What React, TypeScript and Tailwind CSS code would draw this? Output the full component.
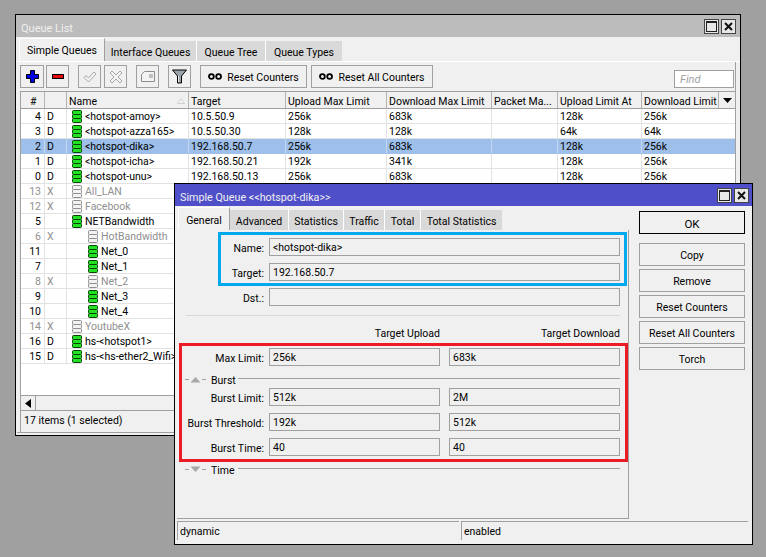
import React from 'react';

const queues = [
  { id: '4', flag: 'D', name: '<hotspot-amoy>', target: '10.5.50.9', up: '256k', down: '683k', upAt: '128k', downAt: '256k' },
  { id: '3', flag: 'D', name: '<hotspot-azza165>', target: '10.5.50.30', up: '128k', down: '128k', upAt: '64k', downAt: '64k' },
  { id: '2', flag: 'D', name: '<hotspot-dika>', target: '192.168.50.7', up: '256k', down: '683k', upAt: '128k', downAt: '256k', selected: true },
  { id: '1', flag: 'D', name: '<hotspot-icha>', target: '192.168.50.21', up: '192k', down: '341k', upAt: '128k', downAt: '256k' },
  { id: '0', flag: 'D', name: '<hotspot-unu>', target: '192.168.50.13', up: '256k', down: '683k', upAt: '128k', downAt: '256k' },
  { id: '13', flag: 'X', name: 'All_LAN' },
  { id: '12', flag: 'X', name: 'Facebook' },
  { id: '5', flag: '', name: 'NETBandwidth' },
  { id: '6', flag: 'X', name: 'HotBandwidth', child: true },
  { id: '11', flag: '', name: 'Net_0', child: true },
  { id: '7', flag: '', name: 'Net_1', child: true },
  { id: '8', flag: 'X', name: 'Net_2', child: true },
  { id: '9', flag: '', name: 'Net_3', child: true },
  { id: '10', flag: '', name: 'Net_4', child: true },
  { id: '14', flag: 'X', name: 'YoutubeX' },
  { id: '16', flag: 'D', name: 'hs-<hotspot1>' },
  { id: '15', flag: 'D', name: 'hs-<hs-ether2_Wifi>' },
];

const QueueIcon = ({ off }: { off: boolean }) => {
  const fill = off ? '#f2f2f2' : '#22e022';
  const line = off ? '#8e8e8e' : '#064006';
  return (
    <svg width="12" height="13" viewBox="0 0 12 13" className="shrink-0">
      {[0.5, 4.5, 8.5].map((y) => (
        <rect key={y} x="1.5" y={y} width="9" height="4" rx="1" fill={fill} stroke={line} />
      ))}
    </svg>
  );
};

const WinButtons = () => (
  <div className="flex gap-[2px]">
    <div className="w-[15px] h-[15px] border border-[#444] bg-[#e8e8e8] flex items-center justify-center">
      <div className="w-[11px] h-[11px] border border-[#222] border-t-2" />
    </div>
    <div className="w-[15px] h-[15px] border border-[#444] bg-[#e8e8e8] flex items-center justify-center">
      <svg width="9" height="9" viewBox="0 0 9 9">
        <path d="M1 1l7 7M8 1l-7 7" stroke="#111" strokeWidth="2" />
      </svg>
    </div>
  </div>
);

const ToolButton = ({ children, w = 'w-[23px]' }: { children: React.ReactNode; w?: string }) => (
  <div className={`${w} h-[23px] border border-[#a0a0a0] flex items-center justify-center shrink-0`}>{children}</div>
);

const Zeros = () => (
  <svg width="14" height="7" viewBox="0 0 14 7" className="shrink-0">
    <ellipse cx="3.400" cy="3.500" rx="2.400" ry="2.400" fill="none" stroke="#000" strokeWidth="1.800" />
    <ellipse cx="10.600" cy="3.500" rx="2.400" ry="2.400" fill="none" stroke="#000" strokeWidth="1.800" />
  </svg>
);

const Field = ({ value, w = 'w-[171px]' }: { value?: string; w?: string }) => (
  <div className={`${w} h-[18px] border border-[#a0a0a0] pl-[3px] leading-[18px] shrink-0`}>{value}</div>
);

const FormRow = ({ label, labelW, children }: { label: string; labelW: string; children: React.ReactNode }) => (
  <div className="flex items-start">
    <div className={`${labelW} h-[18px] pt-[4px] text-right mr-[5px] shrink-0`}>{label}</div>
    {children}
  </div>
);

const GroupHeader = ({ label, open }: { label: string; open: boolean }) => (
  <div className="flex items-center h-[16px]">
    <svg width="21" height="7" viewBox="0 0 21 7" className="shrink-0 ml-[3px] mb-[2px]">
      <path d="M0 3.500h4M17 3.500h4" stroke="#a0a0a0" />
      <path d={open ? 'M5.500 6.500L10.500 1l5 5.500z' : 'M5.500 .5L10.500 6l5-5.500z'} fill="#a8a8a8" />
    </svg>
    <div className="ml-[5px] w-[27px] pt-[2px] shrink-0">{label}</div>
    <div className="h-[2px] mb-[3px] w-[382px] border-t border-[#a0a0a0]" />
  </div>
);

export default function App() {
  return (
    <div
      className="relative w-[766px] h-[557px] bg-[#a0a0a0] overflow-hidden text-[10.5px] leading-[14px] text-black"
      style={{ fontFamily: 'Roboto, "Liberation Sans", sans-serif' }}
    >
      {/* Queue List window */}
      <div className="absolute left-[15px] top-[14px] w-[726px] h-[422px] border border-black bg-[#f0f0f0] flex flex-col">
        <div className="h-[22px] bg-[#bcbcbc] flex items-center justify-between pl-[5px] pr-[4px] shrink-0">
          <span className="text-[#f0f0f0] text-[11px] pt-[6px]">Queue List</span>
          <WinButtons />
        </div>

        {/* tabs */}
        <div className="h-[25px] flex pl-[3px] items-end shrink-0 border-b border-white">
          <div className="w-[86px] h-[23px] bg-[#f0f0f0] border-t border-l border-r border-t-white border-l-white border-r-[#a0a0a0] flex items-center justify-center pt-[2px]">Simple Queues</div>
          <div className="w-[92px] h-[20px] bg-[#d9d9d9] border-r border-white flex items-center justify-center pt-[4px]">Interface Queues</div>
          <div className="w-[69px] h-[20px] bg-[#d9d9d9] border-r border-white flex items-center justify-center pt-[4px]">Queue Tree</div>
          <div className="w-[76px] h-[20px] bg-[#d9d9d9] flex items-center justify-center pt-[4px]">Queue Types</div>
        </div>

        <div className="flex-1 mr-[4px] ml-[1px] mb-[2px] border-r border-b border-[#a0a0a0] flex flex-col min-h-0">
          {/* toolbar */}
          <div className="h-[29px] flex items-start pt-[3px] pl-[3px] relative shrink-0">
            <ToolButton w="w-[24px]">
              <svg width="13" height="13" viewBox="0 0 13 13">
                <path d="M4.500.5h4v4h4v4h-4v4h-4v-4h-4v-4h4z" fill="#0000e0" stroke="#000" />
              </svg>
            </ToolButton>
            <div className="ml-[2px]">
              <ToolButton w="w-[23px]">
                <svg width="12" height="5" viewBox="0 0 12 5">
                  <rect x=".5" y=".5" width="11" height="4" fill="#e01010" stroke="#000" />
                </svg>
              </ToolButton>
            </div>
            <div className="ml-[9px]">
              <ToolButton>
                <svg width="14" height="12" viewBox="0 0 14 12">
                  <path d="M1 6.500l2-2 2.500 2.500L11 1l2 2-7.500 8z" fill="#f4f4f4" stroke="#a6a6a6" />
                </svg>
              </ToolButton>
            </div>
            <div className="ml-[3px]">
              <ToolButton>
                <svg width="14" height="14" viewBox="0 0 14 14">
                  <path d="M1 3l2-2 4 4 4-4 2 2-4 4 4 4-2 2-4-4-4 4-2-2 4-4z" fill="#f4f4f4" stroke="#a6a6a6" />
                </svg>
              </ToolButton>
            </div>
            <div className="ml-[9px]">
              <ToolButton>
                <svg width="14" height="11" viewBox="0 0 14 11">
                  <path d="M.5 10.500V3.500l3-3h10v10zM8 4h4M8 6h4" fill="#f4f4f4" stroke="#8c8c8c" />
                </svg>
              </ToolButton>
            </div>
            <div className="ml-[9px]">
              <ToolButton>
                <svg width="15" height="15" viewBox="0 0 15 15">
                  <path d="M.5 1h14L9.500 7v7h-4V7z" fill="#9aa4ad" stroke="#000" />
                  <path d="M6.500 7v6" stroke="#e8e8e8" />
                </svg>
              </ToolButton>
            </div>
            <div className="ml-[9px]">
              <ToolButton w="w-[107px]">
                <Zeros />
                <span className="ml-[5px] pt-[3px]">Reset Counters</span>
              </ToolButton>
            </div>
            <div className="ml-[4px]">
              <ToolButton w="w-[122px]">
                <Zeros />
                <span className="ml-[5px] pt-[3px]">Reset All Counters</span>
              </ToolButton>
            </div>
            <div className="absolute right-[1px] top-[8px] w-[60px] h-[18px] border border-[#a0a0a0] bg-white pl-[5px] leading-[18px] italic text-[11px] text-[#a0a0a0]">Find</div>
          </div>

          {/* table */}
          <div className="flex-1 ml-[3px] border-l border-[#a0a0a0] flex flex-col min-h-0">
            <div className="flex h-[18px] border-y border-[#a0a0a0] shrink-0">
              <div className="w-[24px] border-r border-[#b4b4b4] pl-[9px] pt-[3px]">#</div>
              <div className="w-[22px] border-r border-[#b4b4b4]" />
              <div className="w-[122px] border-r border-[#b4b4b4] pl-[2px] pt-[3px] flex justify-between pr-[3px]">
                Name
                <svg width="8" height="6" viewBox="0 0 8 6" className="mt-[3px]">
                  <path d="M.5 5.500L4 .5l3.500 5z" fill="#f4f4f4" stroke="#d0d0d0" />
                </svg>
              </div>
              <div className="w-[97px] border-r border-[#b4b4b4] pl-[2px] pt-[3px]">Target</div>
              <div className="w-[101px] border-r border-[#b4b4b4] pl-[2px] pt-[3px]">Upload Max Limit</div>
              <div className="w-[105px] border-r border-[#b4b4b4] pl-[2px] pt-[3px]">Download Max Limit</div>
              <div className="w-[66px] border-r border-[#b4b4b4] pl-[2px] pt-[3px]">Packet Ma...</div>
              <div className="w-[84px] border-r border-[#b4b4b4] pl-[2px] pt-[3px]">Upload Limit At</div>
              <div className="w-[77px] border-r border-[#b4b4b4] pl-[2px] pt-[3px]">Download Limit</div>
              <div className="w-[16px] flex items-center justify-center">
                <svg width="9" height="5" viewBox="0 0 9 5">
                  <path d="M0 0h9L4.500 5z" fill="#000" />
                </svg>
              </div>
            </div>

            <div className="flex-1 bg-white min-h-0">
              {queues.map((q) => {
                const off = q.flag === 'X';
                const sep = q.selected ? 'border-[#c4d8f1]' : 'border-[#e2e2e2]';
                return (
                  <div
                    key={q.id}
                    className={`flex h-[15px] border-b leading-[14px] ${q.selected ? 'bg-[#9dbfe9] border-b-[#9dbfe9]' : 'border-b-[#e2e2e2]'} ${off ? 'text-[#909090]' : ''}`}
                  >
                    <div className={`w-[24px] border-r pr-[3px] pt-[1px] text-right ${sep}`}>{q.id}</div>
                    <div className={`w-[22px] border-r pl-[2px] pt-[1px] ${sep}`}>{q.flag}</div>
                    <div className={`w-[122px] border-r flex items-center gap-[2px] overflow-hidden whitespace-nowrap ${q.child ? 'pl-[20px]' : 'pl-[4px]'} ${sep}`}>
                      <QueueIcon off={off} />
                      <span className="pt-[2px]">{q.name}</span>
                    </div>
                    <div className={`w-[97px] border-r pl-[2px] pt-[1px] ${sep}`}>{q.target}</div>
                    <div className={`w-[101px] border-r pl-[2px] pt-[1px] ${sep}`}>{q.up}</div>
                    <div className={`w-[105px] border-r pl-[2px] pt-[1px] ${sep}`}>{q.down}</div>
                    <div className={`w-[66px] border-r ${sep}`} />
                    <div className={`w-[84px] border-r pl-[2px] pt-[1px] ${sep}`}>{q.upAt}</div>
                    <div className="w-[77px] pl-[2px] pt-[1px]">{q.downAt}</div>
                  </div>
                );
              })}
            </div>

            {/* scrollbar */}
            <div className="h-[16px] flex border-y border-[#a0a0a0] bg-[#f0f0f0] shrink-0">
              <div className="w-[15px] border-r border-[#a0a0a0] flex items-center justify-center">
                <svg width="6" height="9" viewBox="0 0 6 9">
                  <path d="M6 0v9L0 4.500z" fill="#000" />
                </svg>
              </div>
            </div>
            <div className="h-[21px] pl-[3px] pt-[3px] shrink-0">17 items (1 selected)</div>
          </div>
        </div>
      </div>

      {/* Simple Queue dialog */}
      <div className="absolute left-[174px] top-[183px] w-[579px] h-[362px] border border-black bg-[#f0f0f0] flex flex-col">
        <div className="h-[22px] bg-[#4f50c9] flex items-center justify-between pl-[5px] pr-[3px] shrink-0">
          <span className="text-[#f0f0f0] text-[10.75px] pt-[6px]">{'Simple Queue <<hotspot-dika>>'}</span>
          <WinButtons />
        </div>

        <div className="flex h-[313px] shrink-0">
          <div className="w-[454px] shrink-0">
            <div className="h-[24px] flex items-end pl-[3px]">
              <div className="w-[52px] h-[23px] bg-[#f0f0f0] border-t border-l border-r border-t-white border-l-white border-r-[#a0a0a0] flex items-center justify-center pt-[3px]">General</div>
              <div className="w-[59px] h-[20px] bg-[#d9d9d9] border-r border-white flex items-center justify-center pt-[3px]">Advanced</div>
              <div className="w-[55px] h-[20px] bg-[#d9d9d9] border-r border-white flex items-center justify-center pt-[3px]">Statistics</div>
              <div className="w-[41px] h-[20px] bg-[#d9d9d9] border-r border-white flex items-center justify-center pt-[3px]">Traffic</div>
              <div className="w-[36px] h-[20px] bg-[#d9d9d9] border-r border-white flex items-center justify-center pt-[3px]">Total</div>
              <div className="w-[81px] h-[20px] bg-[#d9d9d9] flex items-center justify-center pt-[3px]">Total Statistics</div>
            </div>

            <div className="h-[289px] ml-[2px] border-r border-b border-[#a0a0a0] pt-[2px]">
              <div className="ml-[41px] w-[409px] h-[54px] border-[3px] border-[#00a8ec] pt-[3px] flex flex-col gap-[7px]">
                <FormRow label="Name:" labelW="w-[43px]">
                  <Field value="<hotspot-dika>" w="w-[351px]" />
                </FormRow>
                <FormRow label="Target:" labelW="w-[43px]">
                  <Field value="192.168.50.7" w="w-[351px]" />
                </FormRow>
              </div>
              <div className="mt-[2px]">
                <FormRow label="Dst.:" labelW="w-[87px]">
                  <Field w="w-[351px]" />
                </FormRow>
              </div>
              <div className="ml-[9px] mt-[9px] w-[434px] h-[2px] border-t border-[#d8d8d8]" />
              <div className="flex ml-[92px] gap-[9px] pt-[10px] h-[26px]">
                <div className="w-[171px] text-right">Target Upload</div>
                <div className="w-[171px] text-right">Target Download</div>
              </div>
              <div className="ml-[2px] w-[449px] h-[119px] border-[3px] border-[#ed1c24] pt-[2px]">
                <FormRow label="Max Limit:" labelW="w-[82px]">
                  <div className="flex gap-[9px]">
                    <Field value="256k" />
                    <Field value="683k" />
                  </div>
                </FormRow>
                <div className="mt-[6px]">
                  <GroupHeader label="Burst" open />
                </div>
                <div className="flex flex-col gap-[7px]">
                  <FormRow label="Burst Limit:" labelW="w-[82px]">
                    <div className="flex gap-[9px]">
                      <Field value="512k" />
                      <Field value="2M" />
                    </div>
                  </FormRow>
                  <FormRow label="Burst Threshold:" labelW="w-[82px]">
                    <div className="flex gap-[9px]">
                      <Field value="192k" />
                      <Field value="512k" />
                    </div>
                  </FormRow>
                  <FormRow label="Burst Time:" labelW="w-[82px]">
                    <div className="flex gap-[9px]">
                      <Field value="40" />
                      <Field value="40" />
                    </div>
                  </FormRow>
                </div>
              </div>
              <div className="ml-[5px]">
                <GroupHeader label="Time" open={false} />
              </div>
            </div>
          </div>

          <div className="ml-[10px] pt-[5px] flex flex-col w-[106px] shrink-0">
            <div className="h-[23px] border border-black flex items-center justify-center text-[11.5px] pt-[2px] mb-[9px]">OK</div>
            <div className="flex flex-col gap-[3px]">
              {['Copy', 'Remove', 'Reset Counters', 'Reset All Counters', 'Torch'].map((label) => (
                <div key={label} className="h-[23px] border border-[#a0a0a0] flex items-center justify-center pt-[3px]">{label}</div>
              ))}
            </div>
          </div>
        </div>

        <div className="flex gap-[2px] pl-[2px] mt-[2px]">
          <div className="w-[282px] h-[19px] border-t border-l border-[#a0a0a0] pl-[2px] leading-[19px]">dynamic</div>
          <div className="w-[287px] h-[19px] border-t border-l border-[#a0a0a0] pl-[2px] leading-[19px]">enabled</div>
        </div>
      </div>
    </div>
  );
}
